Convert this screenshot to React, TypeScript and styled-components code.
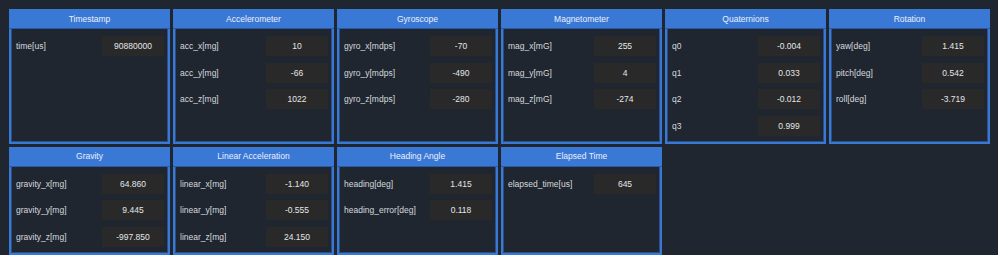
import styled, { createGlobalStyle } from 'styled-components';

const GlobalStyle = createGlobalStyle`
  html, body {
    margin: 0;
    padding: 0;
    background: #1f2630;
  }
  body {
    font-family: 'Liberation Sans', Arial, sans-serif;
    color: #dadde2;
  }
`;

const Board = styled.div`
  display: grid;
  grid-template-columns: repeat(6, 161px);
  grid-auto-rows: auto;
  column-gap: 3px;
  row-gap: 3px;
  padding: 9px;
  align-items: stretch;
  width: 998px;
  height: 255px;
  box-sizing: border-box;
  background: #1f2630;
`;

const Card = styled.section`
  display: flex;
  flex-direction: column;
  border: 2px solid #3a78d6;
  border-top: none;
  background: #1f2630;
  box-shadow: inset 0 -1px 0 #2a4f86, inset 1px 0 0 #2a4f86, inset -1px 0 0 #2a4f86;
`;

const Header = styled.div`
  height: 20px;
  margin: 0 -2px;
  background: #3a78d6;
  border-bottom: 1px solid #2a5aa3;
  box-sizing: border-box;
  display: flex;
  align-items: center;
  justify-content: center;
  font-size: 8.5px;
  color: #eaf0fa;
`;

const Body = styled.div`
  display: flex;
  flex-direction: column;
  gap: 6.5px;
  padding: 7px 4px 6px 5px;
`;

const Row = styled.div`
  display: flex;
  align-items: center;
  justify-content: space-between;
  height: 20px;
`;

const Label = styled.span`
  font-size: 8.5px;
  color: #d6d9de;
  white-space: nowrap;
`;

const Value = styled.span`
  width: 62px;
  height: 20px;
  display: flex;
  align-items: center;
  justify-content: center;
  background: #292929;
  font-size: 8.5px;
  color: #e4e6ea;
`;

type Field = [string, string];
type Panel = { title: string; fields: Field[] };

const panels: Panel[] = [
  { title: 'Timestamp', fields: [['time[us]', '90880000']] },
  {
    title: 'Accelerometer',
    fields: [
      ['acc_x[mg]', '10'],
      ['acc_y[mg]', '-66'],
      ['acc_z[mg]', '1022'],
    ],
  },
  {
    title: 'Gyroscope',
    fields: [
      ['gyro_x[mdps]', '-70'],
      ['gyro_y[mdps]', '-490'],
      ['gyro_z[mdps]', '-280'],
    ],
  },
  {
    title: 'Magnetometer',
    fields: [
      ['mag_x[mG]', '255'],
      ['mag_y[mG]', '4'],
      ['mag_z[mG]', '-274'],
    ],
  },
  {
    title: 'Quaternions',
    fields: [
      ['q0', '-0.004'],
      ['q1', '0.033'],
      ['q2', '-0.012'],
      ['q3', '0.999'],
    ],
  },
  {
    title: 'Rotation',
    fields: [
      ['yaw[deg]', '1.415'],
      ['pitch[deg]', '0.542'],
      ['roll[deg]', '-3.719'],
    ],
  },
  {
    title: 'Gravity',
    fields: [
      ['gravity_x[mg]', '64.860'],
      ['gravity_y[mg]', '9.445'],
      ['gravity_z[mg]', '-997.850'],
    ],
  },
  {
    title: 'Linear Acceleration',
    fields: [
      ['linear_x[mg]', '-1.140'],
      ['linear_y[mg]', '-0.555'],
      ['linear_z[mg]', '24.150'],
    ],
  },
  {
    title: 'Heading Angle',
    fields: [
      ['heading[deg]', '1.415'],
      ['heading_error[deg]', '0.118'],
    ],
  },
  { title: 'Elapsed Time', fields: [['elapsed_time[us]', '645']] },
];

function App() {
  return (
    <>
      <GlobalStyle />
      <Board>
        {panels.map((p) => (
          <Card key={p.title}>
            <Header>{p.title}</Header>
            <Body>
              {p.fields.map(([label, value]) => (
                <Row key={label}>
                  <Label>{label}</Label>
                  <Value>{value}</Value>
                </Row>
              ))}
            </Body>
          </Card>
        ))}
      </Board>
    </>
  );
}

export default App;
